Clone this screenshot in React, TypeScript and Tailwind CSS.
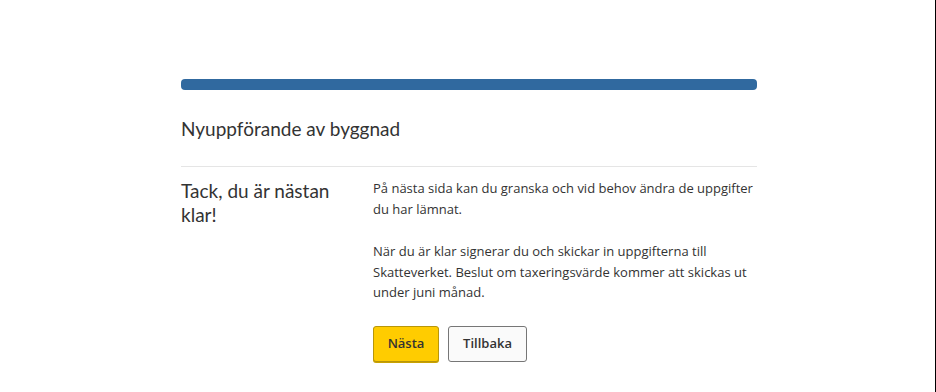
export default function App() {
  return (
    <div className="flex h-[392px] w-[936px] bg-white">
      <div className="flex-1">
        <div className="ml-[181px] w-[576px] pt-[79px]">
          <div className="h-[11px] w-full rounded-[4px] bg-[#30699f]" />
          <h1
            className="mt-[27px] text-[19px] leading-[24px] text-[#333333]"
            style={{ fontFamily: 'Lato, "Open Sans", sans-serif' }}
          >
            Nyuppförande av byggnad
          </h1>
          <div className="mt-[25px] h-px w-full bg-[#e5e5e5]" />
          <div className="mt-[11px] flex">
            <h2
              className="w-[192px] pr-4 pt-px text-[19px] leading-[24px] text-[#333333]"
              style={{ fontFamily: 'Lato, "Open Sans", sans-serif' }}
            >
              Tack, du är nästan klar!
            </h2>
            <div
              className="flex-1 text-[13px] leading-[21px] text-[#333333]"
              style={{ fontFamily: '"Open Sans", sans-serif' }}
            >
              <p>På nästa sida kan du granska och vid behov ändra de uppgifter du har lämnat.</p>
              <p className="mt-[21px] leading-[20.5px]">
                När du är klar signerar du och skickar in uppgifterna till Skatteverket. Beslut om taxeringsvärde kommer att skickas ut under juni månad.
              </p>
              <div className="mt-[23px] flex gap-[9px]">
                <button className="h-[36px] w-[66px] rounded-[3px] border border-[#b8960a] bg-[#ffcc00] text-[13px] font-semibold text-[#333333] shadow-[0_1px_0_#c9a200]">
                  Nästa
                </button>
                <button className="h-[36px] w-[79px] rounded-[3px] border border-[#767676] bg-[#fafafa] text-[13px] font-semibold text-[#333333]">
                  Tillbaka
                </button>
              </div>
            </div>
          </div>
        </div>
      </div>
      <div className="w-px bg-black" />
    </div>
  );
}
